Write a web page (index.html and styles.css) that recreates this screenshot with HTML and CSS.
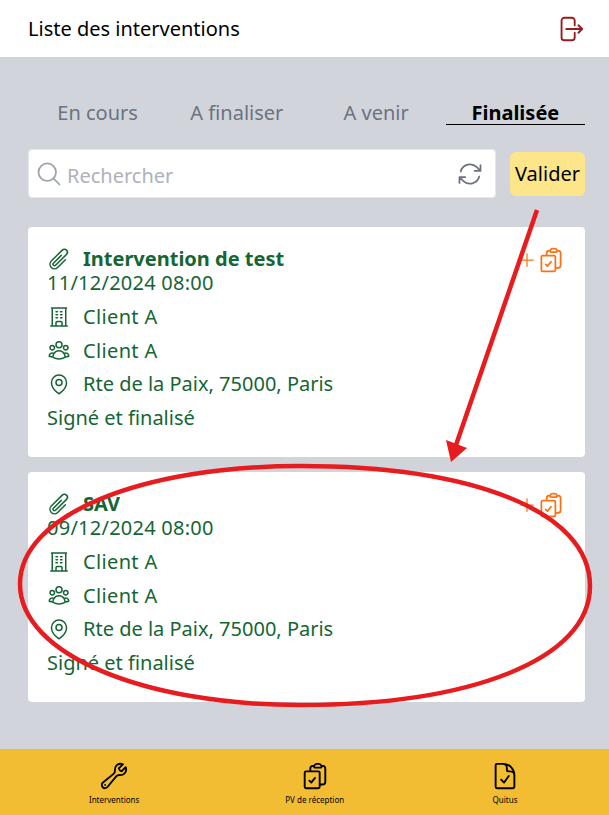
FILE: index.html
```html
<!DOCTYPE html>
<html lang="fr">
<head>
  <meta charset="UTF-8" />
  <meta name="viewport" content="width=device-width, initial-scale=1.0" />
  <title>Liste des interventions</title>
  <link rel="stylesheet" href="styles.css">
</head>
<body>
<svg class="sprite" xmlns="http://www.w3.org/2000/svg">
  <symbol id="i-logout" viewBox="0 0 24 24"><path d="M15.75 9V5.25A2.25 2.25 0 0 0 13.5 3h-6a2.25 2.25 0 0 0-2.25 2.25v13.5A2.25 2.25 0 0 0 7.5 21h6a2.25 2.25 0 0 0 2.25-2.25V15m3 0 3-3m0 0-3-3m3 3H9"/></symbol>
  <symbol id="i-search" viewBox="0 0 24 24"><path d="m21 21-5.197-5.197m0 0A7.5 7.5 0 1 0 5.196 5.196a7.5 7.5 0 0 0 10.607 10.607Z"/></symbol>
  <symbol id="i-refresh" viewBox="0 0 24 24"><path d="M16.023 9.348h4.992v-.001M2.985 19.644v-4.992m0 0h4.992m-4.993 0 3.181 3.183a8.25 8.25 0 0 0 13.803-3.7M4.031 9.865a8.25 8.25 0 0 1 13.803-3.7l3.181 3.182m0-4.991v4.99"/></symbol>
  <symbol id="i-clip" viewBox="0 0 24 24"><path d="m18.375 12.739-7.693 7.693a4.5 4.5 0 0 1-6.364-6.364l10.94-10.94A3 3 0 1 1 19.5 7.372L8.552 18.32m.009-.01-.01.01m5.699-9.941-7.81 7.81a1.5 1.5 0 0 0 2.112 2.13"/></symbol>
  <symbol id="i-building" viewBox="0 0 24 24"><path d="M3.75 21h16.5M4.5 3h15M5.25 3v18m13.5-18v18M9 6.75h1.5m-1.5 3h1.5m-1.5 3h1.5m3-6H15m-1.5 3H15m-1.5 3H15M9 21v-3.375c0-.621.504-1.125 1.125-1.125h3.75c.621 0 1.125.504 1.125 1.125V21"/></symbol>
  <symbol id="i-users" viewBox="0 0 24 24"><path d="M18 18.72a9.094 9.094 0 0 0 3.741-.479 3 3 0 0 0-4.682-2.72m.94 3.198.001.031c0 .225-.012.447-.037.666A11.944 11.944 0 0 1 12 21c-2.17 0-4.207-.576-5.963-1.584A6.062 6.062 0 0 1 6 18.719m12 0a5.971 5.971 0 0 0-.941-3.197m0 0A5.995 5.995 0 0 0 12 12.75a5.995 5.995 0 0 0-5.058 2.772m0 0a3 3 0 0 0-4.681 2.72 8.986 8.986 0 0 0 3.74.477m.94-3.197a5.971 5.971 0 0 0-.94 3.197M15 6.75a3 3 0 1 1-6 0 3 3 0 0 1 6 0Zm6 3a2.25 2.25 0 1 1-4.5 0 2.25 2.25 0 0 1 4.5 0Zm-13.5 0a2.25 2.25 0 1 1-4.5 0 2.25 2.25 0 0 1 4.5 0Z"/></symbol>
  <symbol id="i-pin" viewBox="0 0 24 24"><path d="M15 10.5a3 3 0 1 1-6 0 3 3 0 0 1 6 0Z"/><path d="M19.5 10.5c0 7.142-7.5 11.25-7.5 11.25S4.5 17.642 4.5 10.5a7.5 7.5 0 1 1 15 0Z"/></symbol>
  <symbol id="i-plus" viewBox="0 0 24 24"><path d="M12 4.5v15m7.5-7.5h-15"/></symbol>
  <symbol id="i-clipboard" viewBox="0 0 24 24"><path d="M11.35 3.836c-.065.21-.1.433-.1.664 0 .414.336.75.75.75h4.5a.75.75 0 0 0 .75-.75 2.25 2.25 0 0 0-.1-.664m-5.8 0A2.251 2.251 0 0 1 13.5 2.25H15c1.012 0 1.867.668 2.15 1.586m-5.8 0c-.376.023-.75.05-1.124.08C9.095 4.01 8.25 4.973 8.25 6.108V8.25m8.9-4.414c.376.023.75.05 1.124.08 1.131.094 1.976 1.057 1.976 2.192V16.5A2.25 2.25 0 0 1 18 18.75h-2.25m-7.5-10.5H4.875c-.621 0-1.125.504-1.125 1.125v11.25c0 .621.504 1.125 1.125 1.125h9.75c.621 0 1.125-.504 1.125-1.125V18.75m-7.5-10.5h6.375c.621 0 1.125.504 1.125 1.125v9.375m-8.25-3 1.5 1.5 3-3.75"/></symbol>
  <symbol id="i-wrench" viewBox="0 0 24 24"><path d="M21.75 6.75a4.5 4.5 0 0 1-4.884 4.484c-1.076-.091-2.264.071-2.95.904l-7.152 8.684a2.548 2.548 0 1 1-3.586-3.586l8.684-7.152c.833-.686.995-1.874.904-2.95a4.5 4.5 0 0 1 6.336-4.486l-3.276 3.276a3.004 3.004 0 0 0 2.25 2.25l3.276-3.276c.256.565.398 1.192.398 1.852Z"/><path d="M4.867 19.125h.008v.008h-.008v-.008Z"/></symbol>
  <symbol id="i-doc" viewBox="0 0 24 24"><path d="M10.125 2.25h-4.5c-.621 0-1.125.504-1.125 1.125v17.25c0 .621.504 1.125 1.125 1.125h12.75c.621 0 1.125-.504 1.125-1.125v-9M10.125 2.25h.375a9 9 0 0 1 9 9v.375M10.125 2.25A3.375 3.375 0 0 1 13.5 5.625v1.5c0 .621.504 1.125 1.125 1.125h1.5a3.375 3.375 0 0 1 3.375 3.375M9 15l2.25 2.25L15 12"/></symbol>
</svg>

<div class="app">
  <header class="topbar">
    <h1>Liste des interventions</h1>
    <svg class="icon logout"><use href="#i-logout"/></svg>
  </header>

  <main class="content">
    <nav class="tabs">
      <span class="tab">En cours</span>
      <span class="tab">A finaliser</span>
      <span class="tab">A venir</span>
      <span class="tab active">Finalisée</span>
    </nav>

    <div class="search-row">
      <div class="search">
        <svg class="icon search-icon"><use href="#i-search"/></svg>
        <span class="placeholder">Rechercher</span>
        <svg class="icon refresh"><use href="#i-refresh"/></svg>
      </div>
      <button class="validate">Valider</button>
    </div>

    <article class="card">
      <div class="card-actions">
        <svg class="icon plus"><use href="#i-plus"/></svg>
        <svg class="icon clipboard"><use href="#i-clipboard"/></svg>
      </div>
      <div class="card-title">
        <svg class="icon"><use href="#i-clip"/></svg>
        <strong>Intervention de test</strong>
      </div>
      <div class="card-date">11/12/2024 08:00</div>
      <div class="card-row client"><svg class="icon"><use href="#i-building"/></svg>Client A</div>
      <div class="card-row client"><svg class="icon"><use href="#i-users"/></svg>Client A</div>
      <div class="card-row"><svg class="icon"><use href="#i-pin"/></svg>Rte de la Paix, 75000, Paris</div>
      <div class="card-row">Signé et finalisé</div>
    </article>

    <article class="card">
      <div class="card-actions">
        <svg class="icon plus"><use href="#i-plus"/></svg>
        <svg class="icon clipboard"><use href="#i-clipboard"/></svg>
      </div>
      <div class="card-title">
        <svg class="icon"><use href="#i-clip"/></svg>
        <strong>SAV</strong>
      </div>
      <div class="card-date">09/12/2024 08:00</div>
      <div class="card-row client"><svg class="icon"><use href="#i-building"/></svg>Client A</div>
      <div class="card-row client"><svg class="icon"><use href="#i-users"/></svg>Client A</div>
      <div class="card-row"><svg class="icon"><use href="#i-pin"/></svg>Rte de la Paix, 75000, Paris</div>
      <div class="card-row">Signé et finalisé</div>
    </article>
  </main>

  <footer class="bottombar">
    <div class="nav-item"><svg class="icon"><use href="#i-wrench"/></svg><span>Interventions</span></div>
    <div class="nav-item"><svg class="icon"><use href="#i-clipboard"/></svg><span>PV de réception</span></div>
    <div class="nav-item"><svg class="icon"><use href="#i-doc"/></svg><span>Quitus</span></div>
  </footer>

  <!-- annotation drawn over the screenshot -->
  <svg class="markup" viewBox="0 0 609 815" xmlns="http://www.w3.org/2000/svg">
    <path class="ring" d="M300 466C470 466 590 510 590 586C590 660 470 705 300 705C145 705 20 655 20 584C20 515 140 466 300 466Z"/>
    <line x1="537" y1="210" x2="456" y2="445"/>
    <polygon points="451,462 446,440 467,448"/>
  </svg>
</div>
</body>
</html>
```

FILE: styles.css
```css
* {
  box-sizing: border-box;
}
body {
  margin: 0;
  font-family: "Noto Sans", "Open Sans", sans-serif;
  background: #d1d5db;
}
.sprite {
  display: none;
}
.icon {
  width: 24px;
  height: 24px;
  flex: none;
  fill: none;
  stroke: currentColor;
  stroke-width: 1.5;
  stroke-linecap: round;
  stroke-linejoin: round;
}
.app {
  position: relative;
  display: flex;
  flex-direction: column;
  height: 815px;
  overflow: hidden;
}
.topbar {
  display: flex;
  align-items: center;
  justify-content: space-between;
  height: 57px;
  padding: 0 24px 0 28px;
  background: #fff;
}
.topbar h1 {
  margin: 0;
  font-size: 20px;
  font-weight: 400;
  color: #000;
}
.logout {
  width: 30px;
  height: 30px;
  color: #991b1b;
}
.content {
  flex: 1;
  padding: 42px 24px 0 28px;
}
.tabs {
  display: grid;
  grid-template-columns: repeat(4, 1fr);
  margin-bottom: 24px;
}
.tab {
  height: 26px;
  line-height: 28px;
  font-size: 20px;
  text-align: center;
  color: #6b7280;
}
.tab.active {
  font-weight: 700;
  color: #000;
  border-bottom: 1px solid #000;
}
.search-row {
  display: flex;
  align-items: center;
  gap: 14px;
  margin-bottom: 29px;
}
.search {
  flex: 1;
  display: flex;
  align-items: center;
  height: 49px;
  padding: 0 11px 0 6px;
  background: #fff;
  border: 1px solid #e5e7eb;
  border-radius: 4px;
}
.search-icon {
  width: 28px;
  height: 28px;
  color: #9ca3af;
}
.placeholder {
  flex: 1;
  margin-left: 4px;
  padding-top: 3px;
  font-size: 20px;
  color: #adb2ba;
}
.refresh {
  width: 28px;
  height: 28px;
  color: #6b7280;
}
.validate {
  width: 75px;
  height: 44px;
  padding: 0;
  border: none;
  border-radius: 6px;
  background: #fde68a;
  font-family: inherit;
  font-size: 20px;
  color: #000;
}
.card {
  position: relative;
  height: 230px;
  margin-bottom: 15px;
  padding: 20px 19px 0;
  background: #fff;
  border-radius: 4px;
  font-size: 20px;
  color: #166534;
}
.card-actions {
  position: absolute;
  top: 19px;
  right: 20px;
  display: flex;
  align-items: center;
  color: #f97316;
}
.plus {
  width: 20px;
  height: 20px;
}
.clipboard {
  width: 28px;
  height: 28px;
}
.card-title {
  display: flex;
  align-items: center;
  gap: 12px;
  height: 24px;
  line-height: 24px;
}
.card-title strong {
  font-weight: 700;
}
.card-date {
  height: 24px;
  line-height: 24px;
  margin-bottom: 5px;
  letter-spacing: .25px;
}
.card-row {
  display: flex;
  align-items: center;
  gap: 12px;
  height: 33.6px;
}
.client {
  letter-spacing: .35px;
}
.bottombar {
  display: flex;
  justify-content: space-around;
  align-items: flex-start;
  height: 66px;
  padding: 12px 16px 0;
  background: #f2bd32;
}
.nav-item {
  display: flex;
  flex-direction: column;
  align-items: center;
  font-size: 8px;
  color: #000;
}
.nav-item .icon {
  width: 30px;
  height: 30px;
}
.nav-item span {
  margin-top: 3px;
}
.markup {
  position: absolute;
  top: 0;
  left: 0;
  width: 609px;
  height: 815px;
  pointer-events: none;
}
.markup .ring, .markup line {
  fill: none;
  stroke: #e71c1f;
  stroke-width: 4.5;
}
.markup polygon {
  fill: #e71c1f;
}
```
